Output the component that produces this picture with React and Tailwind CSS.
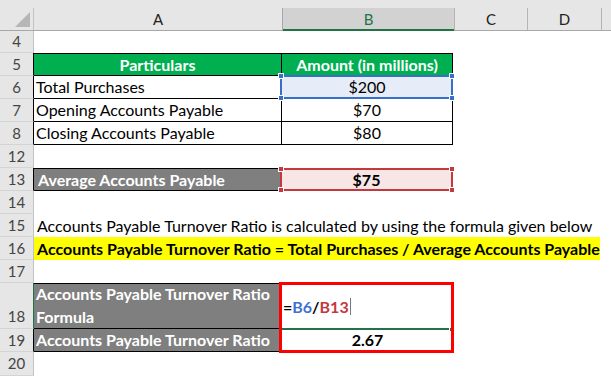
export default function App() {
  const rowHead = "w-[34px] shrink-0 flex justify-center bg-[#e6e6e6] border-r border-b border-b-[#d4d4d4] text-[#444] text-[15px]";

  function Handles({ color }) {
    return (
      <>
        <span className={`absolute -left-[4px] -top-[4px] w-[6px] h-[6px] border border-white ${color}`} />
        <span className={`absolute -left-[4px] -bottom-[4px] w-[6px] h-[6px] border border-white ${color}`} />
        <span className={`absolute -right-[4px] -top-[4px] w-[6px] h-[6px] border border-white ${color}`} />
        <span className={`absolute -right-[4px] -bottom-[4px] w-[6px] h-[6px] border border-white ${color}`} />
      </>
    );
  }

  return (
    <div className="relative w-[611px] h-[376px] overflow-hidden bg-white text-[16px] leading-[23px] text-black font-[Lato,'Liberation_Sans',sans-serif]">
      {/* column headers */}
      <div className="h-[8px] bg-[#e6e6e6]" />
      <div className="flex h-[23px] bg-[#e6e6e6] border-b border-[#a8a8a8] leading-[22px] text-[15px] text-[#222]">
        <div className="w-[34px] shrink-0 relative border-r border-[#c2c2c2]">
          <svg className="absolute left-[15px] top-[4px]" width="15" height="15" viewBox="0 0 15 15">
            <polygon points="15,0 15,15 0,15" fill="#b6b6b6" />
          </svg>
        </div>
        <div className="w-[249px] shrink-0 text-center border-r border-[#a8a8a8]">A</div>
        <div className="w-[171px] shrink-0 text-center bg-[#d2d2d2] text-[#217346] border-b-2 border-[#217346] -mb-[1px]">B</div>
        <div className="w-[74px] shrink-0 text-center border-r border-l border-[#b4b4b4]">C</div>
        <div className="w-[74px] shrink-0 text-center border-r border-[#b4b4b4]">D</div>
        <div className="flex-1" />
      </div>

      {/* row 4 */}
      <div className="flex h-[22px]">
        <div className={`${rowHead} border-r-[#c2c2c2] items-center`}>4</div>
        <div className="flex-1" />
      </div>

      {/* row 5 */}
      <div className="flex h-[23px]">
        <div className={`${rowHead} border-r-black items-center`}>5</div>
        <div className="w-[248px] shrink-0 bg-[#00b050] border-y border-r border-black text-white font-bold text-center leading-[21px]">Particulars</div>
        <div className="w-[171px] shrink-0 bg-[#00b050] border-y border-r border-black text-white font-bold text-center leading-[21px]">Amount (in millions)</div>
        <div className="flex-1" />
      </div>

      {/* row 6 */}
      <div className="flex h-[23px]">
        <div className={`${rowHead} border-r-black items-center`}>6</div>
        <div className="w-[248px] shrink-0 border-b border-r border-black pl-[2px] leading-[22px]">Total Purchases</div>
        <div className="w-[171px] shrink-0 relative bg-[#e6edf8] border-b border-r border-black text-center leading-[22px]">
          $200
          <div className="absolute -left-[2px] -top-[1px] -right-[1px] -bottom-[1px] border-2 border-[#3a6fc9]">
            <Handles color="bg-[#3a6fc9]" />
          </div>
        </div>
        <div className="flex-1" />
      </div>

      {/* row 7 */}
      <div className="flex h-[23px]">
        <div className={`${rowHead} border-r-black items-center`}>7</div>
        <div className="w-[248px] shrink-0 border-b border-r border-black pl-[2px] leading-[22px]">Opening Accounts Payable</div>
        <div className="w-[171px] shrink-0 border-b border-r border-black text-center leading-[22px]">$70</div>
        <div className="flex-1" />
      </div>

      {/* row 8 */}
      <div className="flex h-[23px]">
        <div className={`${rowHead} border-r-black items-center`}>8</div>
        <div className="w-[248px] shrink-0 border-b border-r border-black pl-[2px] leading-[22px]">Closing Accounts Payable</div>
        <div className="w-[171px] shrink-0 border-b border-r border-black text-center leading-[22px]">$80</div>
        <div className="flex-1" />
      </div>

      {/* row 12 */}
      <div className="flex h-[23px]">
        <div className={`${rowHead} border-r-[#c2c2c2] items-center`}>12</div>
        <div className="flex-1" />
      </div>

      {/* row 13 */}
      <div className="flex h-[23px]">
        <div className={`${rowHead} border-r-black items-center`}>13</div>
        <div className="w-[246px] shrink-0 bg-[#7f7f7f] border-y border-black text-white font-bold pl-[4px] leading-[21px]">Average Accounts Payable</div>
        <div className="w-[173px] shrink-0 relative bg-[#f8e6e6] text-center font-bold leading-[23px]">
          $75
          <div className="absolute inset-0 border-2 border-[#c4393e]">
            <Handles color="bg-[#c4393e]" />
          </div>
        </div>
        <div className="flex-1" />
      </div>

      {/* row 14 */}
      <div className="flex h-[23px]">
        <div className={`${rowHead} border-r-[#c2c2c2] items-center`}>14</div>
        <div className="flex-1" />
      </div>

      {/* row 15 */}
      <div className="flex h-[23px]">
        <div className={`${rowHead} border-r-[#c2c2c2] items-center`}>15</div>
        <div className="flex-1 pl-[3px] whitespace-nowrap">Accounts Payable Turnover Ratio is calculated by using the formula given below</div>
      </div>

      {/* row 16 */}
      <div className="flex h-[23px]">
        <div className={`${rowHead} border-r-[#c2c2c2] items-center`}>16</div>
        <div className="w-[566px] shrink-0 bg-[#ffff00] pl-[3px] font-bold whitespace-nowrap">Accounts Payable Turnover Ratio = Total Purchases / Average Accounts Payable</div>
        <div className="flex-1" />
      </div>

      {/* row 17 */}
      <div className="flex h-[23px]">
        <div className={`${rowHead} border-r-[#c2c2c2] items-center`}>17</div>
        <div className="flex-1" />
      </div>

      {/* row 18 */}
      <div className="flex h-[46px]">
        <div className={`${rowHead} border-r-[#217346] items-end`}>18</div>
        <div className="w-[248px] shrink-0 bg-[#7f7f7f] border-y border-r border-black text-white font-bold pl-[2px] flex flex-col justify-end">
          <span>Accounts Payable Turnover Ratio</span>
          <span>Formula</span>
        </div>
        <div className="w-[171px] shrink-0 relative flex items-center pl-[1px] font-bold">
          <span>=</span>
          <span className="text-[#3f72d0]">B6</span>
          <span>/</span>
          <span className="text-[#c4393e]">B13</span>
          <span className="ml-[1px] w-[1px] h-[17px] bg-[#777]" />
          <div className="absolute left-0 right-[4px] -bottom-[1px] h-[2px] bg-[#217346]" />
          <div className="absolute right-0 -bottom-[2px] w-[3px] h-[3px] bg-[#217346]" />
        </div>
        <div className="flex-1" />
      </div>

      {/* row 19 */}
      <div className="flex h-[23px]">
        <div className={`${rowHead} border-r-black items-center`}>19</div>
        <div className="w-[248px] shrink-0 bg-[#7f7f7f] border-b border-r border-black text-white font-bold pl-[2px] leading-[22px]">Accounts Payable Turnover Ratio</div>
        <div className="w-[171px] shrink-0 text-center font-bold leading-[22px]">2.67</div>
        <div className="flex-1" />
      </div>

      {/* row 20 */}
      <div className="flex h-[24px]">
        <div className={`${rowHead} border-r-[#c2c2c2] items-center`}>20</div>
        <div className="flex-1" />
      </div>

      {/* red annotation box */}
      <div className="absolute left-[279px] top-[282px] w-[175px] h-[71px] border-[3px] border-[#ff0000] pointer-events-none" />
    </div>
  );
}
